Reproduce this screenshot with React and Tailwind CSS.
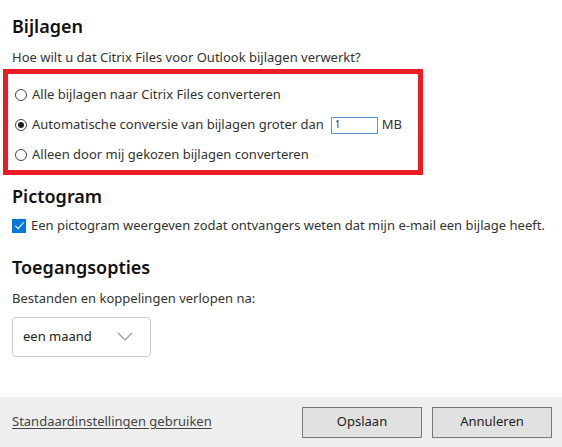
import { useState } from "react";

function Radio({ checked }) {
  return (
    <span className="w-[12px] h-[12px] rounded-full border border-[#444] bg-white flex items-center justify-center flex-shrink-0">
      {checked && <span className="w-[6px] h-[6px] rounded-full bg-[#222]" />}
    </span>
  );
}

export default function App() {
  const [mode, setMode] = useState(1);

  const options = [
    "Alle bijlagen naar Citrix Files converteren",
    "Automatische conversie van bijlagen groter dan",
    "Alleen door mij gekozen bijlagen converteren",
  ];

  return (
    <div
      className="w-[562px] h-[447px] bg-white flex flex-col text-[#333] overflow-hidden"
      style={{ fontFamily: '"Noto Sans", "Open Sans", sans-serif' }}
    >
      <div className="flex-1 flex flex-col">
        {/* ─── Bijlagen ───────────────────────────── */}
        <h2 className="px-3 pt-[13px] text-[18px] leading-[26px] font-semibold text-[#111]">
          Bijlagen
        </h2>
        <p className="px-3 mt-[10px] text-[13px] leading-[16px]">
          Hoe wilt u dat Citrix Files voor Outlook bijlagen verwerkt?
        </p>

        <div className="ml-[3px] mt-[4px] w-[420px] h-[106px] border-[5px] border-[#ed1c24] flex flex-col pl-[7px] pt-[12px] gap-[12px]">
          {options.map((label, i) => (
            <div
              key={i}
              className="flex items-center gap-[5px] h-[18px] text-[13px] cursor-pointer"
              onClick={() => setMode(i)}
            >
              <Radio checked={mode === i} />
              <span>{label}</span>
              {i === 1 && (
                <>
                  <span className="ml-[2px] w-[47px] h-[17px] border border-[#5b9bd5] text-[10px] leading-[12px] pl-[3px] text-[#333]">
                    1
                  </span>
                  <span className="ml-[-1px]">MB</span>
                </>
              )}
            </div>
          ))}
        </div>

        {/* ─── Pictogram ──────────────────────────── */}
        <h2 className="px-3 mt-[8px] text-[18px] leading-[26px] font-semibold text-[#111]">
          Pictogram
        </h2>
        <div className="px-3 mt-[7px] flex items-center gap-[5px] text-[13px]">
          <span className="w-[14px] h-[14px] bg-[#0078d7] flex items-center justify-center flex-shrink-0">
            <svg width="11" height="11" viewBox="0 0 12 12" fill="none">
              <path d="M1.5 6.5 L4.5 9.5 L10.5 2.5" stroke="white" strokeWidth="1.2" />
            </svg>
          </span>
          <span>Een pictogram weergeven zodat ontvangers weten dat mijn e-mail een bijlage heeft.</span>
        </div>

        {/* ─── Toegangsopties ─────────────────────── */}
        <h2 className="px-3 mt-[18px] text-[18px] leading-[26px] font-semibold text-[#111]">
          Toegangsopties
        </h2>
        <p className="px-3 mt-[10px] text-[13px] leading-[16px]">
          Bestanden en koppelingen verlopen na:
        </p>
        <div className="ml-3 mt-[11px] w-[139px] h-[40px] border border-[#ccc] rounded-[4px] flex items-center justify-between pl-[10px] pr-[17px] text-[13px] text-[#222]">
          <span>een maand</span>
          <svg width="16" height="9" viewBox="0 0 16 9" fill="none">
            <path d="M1 1 L8 8 L15 1" stroke="#999" strokeWidth="1.2" />
          </svg>
        </div>
      </div>

      {/* ─── Footer ───────────────────────────────── */}
      <div className="h-[50px] bg-[#eeeeee] flex items-center justify-between pl-3 pr-[10px]">
        <a className="text-[13px] text-[#444] underline underline-offset-2 cursor-pointer">
          Standaardinstellingen gebruiken
        </a>
        <div className="flex gap-[10px]">
          <button className="w-[120px] h-[31px] bg-[#e1e1e1] border border-[#777] text-[13px] text-[#222]">
            Opslaan
          </button>
          <button className="w-[120px] h-[31px] bg-[#e1e1e1] border border-[#777] text-[13px] text-[#222]">
            Annuleren
          </button>
        </div>
      </div>
    </div>
  );
}
